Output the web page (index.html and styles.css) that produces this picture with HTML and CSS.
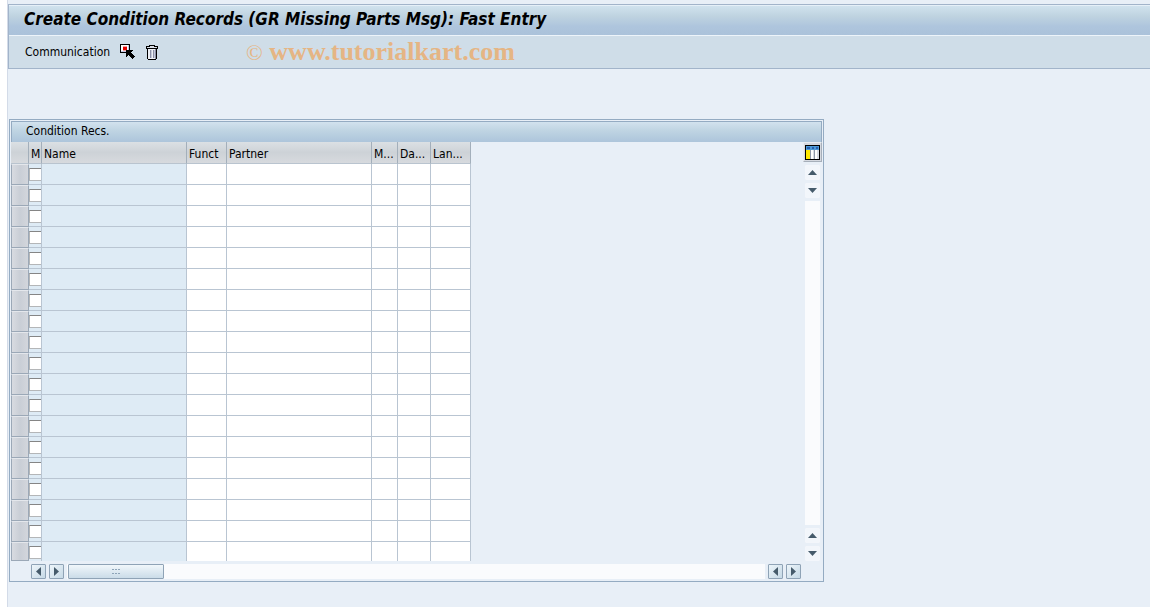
FILE: index.html
```html
<!DOCTYPE html>
<html lang="en">
<head>
<meta charset="utf-8">
<title>Create Condition Records (GR Missing Parts Msg): Fast Entry</title>
<link rel="stylesheet" href="styles.css">
</head>
<body>
<div class="window">
  <header class="top">
    <h1 class="title">Create Condition Records (GR Missing Parts Msg): Fast Entry</h1>
    <div class="toolbar">
      <button class="tool text-tool" type="button">Communication</button>
      <button class="tool" type="button" aria-label="Choose detail">
        <svg width="16" height="16" viewBox="0 0 16 16" shape-rendering="crispEdges">
          <path fill="#000" d="M0 0h10v9H0z"/><path fill="#fff" d="M1 1h8v7H1z"/>
          <path fill="#c7cbe8" d="M1 7h8v1H1zM8 1h1v7H8z"/><path fill="#f5a0a0" d="M3 2h4v5H3z"/><path fill="#e40000" d="M3 3h4v3H3z"/>
          <path fill="#000" d="M6 6h7v1h-1v1h-1v1h1v1h1v1h1v1h1v1h-1v1h-1v1h-1v-1h-1v-1h-1v-1H9v-1H8v1H7v1H6z"/>
        </svg>
      </button>
      <button class="tool" type="button" aria-label="Delete">
        <svg width="12" height="15" viewBox="0 0 12 15" shape-rendering="crispEdges">
          <path fill="#000" d="M3 0h6v1h3v3h-1v10h-1v1H2v-1H1V4H0V1h3z"/>
          <path fill="#d8dde6" d="M4 1h4v1H4zM1 2h10v1H1z"/><path fill="#eef0f6" d="M2 4h8v10H2z"/>
          <path fill="#8a8fa6" d="M4 5h1v8H4zM7 5h1v8H7zM9 4h1v10H9z"/><path fill="#c5cadb" d="M5 5h1v8H5zM8 5h1v8H8z"/>
        </svg>
      </button>
      <p class="mark"><span class="copy">©</span> <strong>www.tutorialkart.com</strong></p>
    </div>
  </header>

  <main class="panel">
    <h2 class="panel-title">Condition Recs.</h2>
    <div class="grid">
      <div class="records">
        <table>
          <colgroup><col class="c-sel"><col class="c-mark"><col class="c-name"><col class="c-funct"><col class="c-partner"><col class="c-m"><col class="c-da"><col class="c-lan"></colgroup>
          <thead><tr><th></th><th>M</th><th>Name</th><th>Funct</th><th>Partner</th><th>M...</th><th>Da...</th><th>Lan...</th></tr></thead>
          <tbody id="rows"></tbody>
        </table>
      </div>
      <div class="vside">
        <button class="config" type="button" aria-label="Table settings">
          <svg width="15" height="15" viewBox="0 0 15 15" shape-rendering="crispEdges">
            <path d="M0 0h15v15H0z"/><path fill="#4c9ad8" d="M1 1h13v4H1z"/><path fill="#2860b0" d="M2 2h3v2H2zM7 2h2v2H7zM11 2h2v2h-2z"/>
            <path fill="#ffe900" d="M1 5h4v9H1z"/><path fill="#8f98a8" d="M5 5h9v9H5z"/><path fill="#d9dce4" d="M6 5h3v9H6zM10 5h4v9h-4z"/><path fill="#fff" d="M6 5h2v9H6zM10 5h2v9h-2z"/>
          </svg>
        </button>
        <button class="arrow plain" type="button" aria-label="Page up"><svg width="9" height="5" viewBox="0 0 9 5"><path d="M0 5L4.500 0 9 5z"/></svg></button>
        <button class="arrow plain" type="button" aria-label="Row up"><svg width="9" height="5" viewBox="0 0 9 5"><path d="M0 0h9L4.500 5z"/></svg></button>
        <div class="vtrack"></div>
        <button class="arrow plain" type="button" aria-label="Row down"><svg width="9" height="5" viewBox="0 0 9 5"><path d="M0 5L4.500 0 9 5z"/></svg></button>
        <button class="arrow plain" type="button" aria-label="Page down"><svg width="9" height="5" viewBox="0 0 9 5"><path d="M0 0h9L4.500 5z"/></svg></button>
      </div>
    </div>
    <div class="hside">
      <button class="arrow" type="button" aria-label="First column"><svg width="5" height="9" viewBox="0 0 5 9"><path d="M5 0v9L0 4.500z"/></svg></button>
      <button class="arrow" type="button" aria-label="Column right"><svg width="5" height="9" viewBox="0 0 5 9"><path d="M0 0v9l5-4.500z"/></svg></button>
      <div class="htrack"><div class="thumb"><svg width="8" height="5" viewBox="0 0 8 5" shape-rendering="crispEdges"><path fill="#8ea4b8" d="M0 0h2v1H0zM3 0h2v1H3zM6 0h2v1H6zM0 4h2v1H0zM3 4h2v1H3zM6 4h2v1H6z"/></svg></div></div>
      <button class="arrow" type="button" aria-label="Column left"><svg width="5" height="9" viewBox="0 0 5 9"><path d="M5 0v9L0 4.500z"/></svg></button>
      <button class="arrow" type="button" aria-label="Last column"><svg width="5" height="9" viewBox="0 0 5 9"><path d="M0 0v9l5-4.500z"/></svg></button>
    </div>
  </main>
</div>
<script src="rows.js"></script>
</body>
</html>
```
FILE: styles.css
```css
* { box-sizing: border-box; }
body {
  margin: 0;
  background: #fff;
  color: #000;
  font: 12px/16px Tahoma, "DejaVu Sans Condensed", "DejaVu Sans", sans-serif;
}
button { margin: 0; padding: 0; border: 0; background: none; color: inherit; font: inherit; }
svg { display: block; }
.window { margin-left: 7px; min-height: 100vh; border-left: 1px solid #d3dbe8; background: #e8eff7; padding-top: 4px; }
.top { border: 1px solid #a2b4ca; border-right: 0; }
.title {
  margin: 0; height: 30px; padding-left: 15px;
  border-top: 1px solid #e6f0f8;
  background: linear-gradient(#d0e2ee, #bfd3e0 35%, #aec5dd 70%, #abc2da);
  font: italic bold 17px/26px Tahoma, "DejaVu Sans Condensed", "DejaVu Sans", sans-serif;
  white-space: nowrap;
}
.toolbar { display: flex; align-items: center; height: 33px; padding-left: 16px; border-top: 1px solid #edf4fa; background: #cfdde8; }
.tool { margin-right: 10px; }
.mark { margin: 0 0 0 78px; color: #e5b584; font: 26px/30px "Liberation Serif", serif; white-space: nowrap; }
.copy { font-size: 22px; }

.panel { width: 100%; max-width: 815px; margin: 50px 0 0 1px; border: 1px solid #94abc2; }
.panel-title {
  margin: 1px 1px 0; height: 21px; padding-left: 14px;
  border: 1px solid #94abc2; border-bottom: 0;
  background: linear-gradient(#d2e2ee, #c0d5e3 40%, #adc5db);
  font-size: 12px; font-weight: normal; line-height: 18px;
}
.grid { display: flex; justify-content: space-between; padding: 0 1px; }
table { width: 460px; table-layout: fixed; border-spacing: 0; }
.c-sel { width: 18px; }
.c-mark { width: 13px; }
.c-name, .c-partner { width: 145px; }
.c-funct { width: 40px; }
.c-m { width: 26px; }
.c-da { width: 33px; }
.c-lan { width: 40px; }
th {
  height: 22px; padding: 2px 0 0 2px; overflow: hidden;
  border-right: 1px solid #a3afbb; border-bottom: 1px solid #b9c4cf;
  background: linear-gradient(#dbe0e4, #cdd2d7 50%, #d7dade);
  font-weight: normal; text-align: left; white-space: nowrap;
}
td { height: 21px; padding: 0; border-right: 1px solid #b9c5d2; border-bottom: 1px solid #b9c5d2; background: #fff; vertical-align: top; }
tbody tr:last-child td { height: 19px; border-bottom: 0; }
tbody .sel { border: 1px solid #9ba8b7; border-top-color: #e4e7ec; background: linear-gradient(90deg, #d8dbe1, #c9ced6 50%, #d3d6dc); }
tbody tr:last-child .sel { border-bottom: 1px solid #9ba8b7; }
.pick, .name { background: #deebf5; }
td.pick, td.name { background: #deebf5; }
.pick input {
  display: block; appearance: none; width: 100%; height: 13px; margin: 4px 0 0;
  border: 1px solid #b4b6b8; border-top: 1px solid #858585; border-right: 0; background: #fff;
}
.cell { display: block; width: 100%; height: 17px; padding: 0 2px; border: 0; background: none; font: inherit; }

.vside { display: flex; flex-direction: column; align-items: center; gap: 3px; width: 20px; }
.config {
  display: grid; place-items: center; width: 19px; height: 20px;
  border: 1px solid #e8ebef; border-right-color: #a6afba; border-bottom-color: #a6afba; background: #d5d9e0;
}
.arrow {
  display: grid; place-items: center; flex: none; width: 15px; height: 15px;
  border: 1px solid #8fa3b6; border-radius: 1px; background: linear-gradient(135deg, #edf5fa, #c6d9e6); fill: #465b6b;
}
.plain { border-color: #f3f6fb; background: #f2f6fb; }
.vtrack { flex: 1; width: 15px; background: #fafbfd; }
.hside { display: flex; align-items: center; gap: 3px; height: 20px; padding: 0 22px 0 21px; }
.htrack { flex: 1; height: 15px; padding-left: 1px; background: #fafbfd; }
.thumb { display: grid; place-items: center; width: 96px; height: 15px; border: 1px solid #8fa3b6; border-radius: 1px; background: linear-gradient(#f1f7fb, #cbdce8); }
```
FILE: rows.js
```js
const fields = ["Function", "Partner", "Medium", "Date/time", "Language"];
const body = document.getElementById("rows");
for (let n = 1; n <= 19; n++) {
  const row = body.insertRow();
  row.innerHTML =
    '<td class="sel"></td>' +
    `<td class="pick"><input type="checkbox" aria-label="Mark row ${n}"></td>` +
    '<td class="name"></td>' +
    fields.map(f => `<td><input class="cell" type="text" aria-label="${f}, row ${n}"></td>`).join("");
}
```
